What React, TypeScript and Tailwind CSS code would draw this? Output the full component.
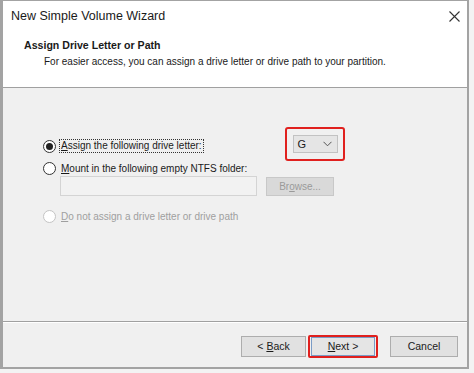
import React from "react";

function Radio({ checked, disabled }: { checked?: boolean; disabled?: boolean }) {
  return (
    <span
      className={`flex h-[13px] w-[13px] shrink-0 items-center justify-center rounded-full border bg-white ${
        disabled ? "border-[#c4c4c4]" : "border-[#333333]"
      }`}
    >
      {checked && <span className="h-[7px] w-[7px] rounded-full bg-[#222222]" />}
    </span>
  );
}

export default function App() {
  return (
    <div
      className="h-[373px] w-[474px] bg-[#f3f3f3] text-[#1a1a1a]"
      style={{ fontFamily: '"Liberation Sans", Arial, sans-serif' }}
    >
      <div className="flex h-[369px] w-[469px] flex-col border-l-[3px] border-r-[2px] border-t-[1px] border-b-[2px] border-[#a3a3a3] bg-[#f0f0f0]">
        {/* title + header */}
        <div className="flex h-[86px] flex-col bg-white">
          <div className="flex h-[30px] items-center justify-between pl-[8px] pr-[7px]">
            <span className="text-[12.5px] text-[#1a1a1a]">New Simple Volume Wizard</span>
            <svg width="11" height="11" viewBox="0 0 11 11">
              <path d="M0.5 0.5 L10.5 10.5 M10.5 0.5 L0.5 10.5" stroke="#333" strokeWidth="1.1" />
            </svg>
          </div>
          <div className="pl-[21px] pt-[8px] text-[10.6px] font-bold leading-[13px]">Assign Drive Letter or Path</div>
          <div className="pl-[41px] pt-[3px] text-[10px] leading-[13px]">
            For easier access, you can assign a drive letter or drive path to your partition.
          </div>
        </div>
        <div className="h-[1px] bg-[#a0a0a0]" />
        {/* body */}
        <div className="flex flex-1 flex-col pl-[40px] pt-[39px] text-[10px]">
          <div className="flex h-[34px] items-center">
            <div className="flex w-[242px] items-center pt-[4px]">
              <Radio checked />
              <span className="ml-[3px] border border-dotted border-[#333] px-[1px] leading-[12px]">
                <span className="underline">A</span>ssign the following drive letter:
              </span>
            </div>
            <div className="flex h-[34px] w-[60px] items-center justify-center rounded-[3px] border-[2.5px] border-[#e0201e]">
              <div className="flex h-[18px] w-[45px] items-center justify-between border border-[#c2c2c2] bg-[#e5e5e5] pl-[4px] pr-[5px]">
                <span className="text-[11px]">G</span>
                <svg width="9" height="6" viewBox="0 0 9 6">
                  <path d="M0.5 0.8 L4.5 4.8 L8.5 0.8" fill="none" stroke="#555" strokeWidth="1" />
                </svg>
              </div>
            </div>
          </div>
          <div className="flex h-[14px] items-center">
            <Radio />
            <span className="ml-[5px]">
              <span className="underline">M</span>ount in the following empty NTFS folder:
            </span>
          </div>
          <div className="mt-[1px] flex items-start">
            <div className="ml-[17px] h-[20px] w-[197px] border border-[#d4d4d4] bg-[#f2f2f2]" />
            <div className="ml-[9px] mt-[1px] flex h-[19px] w-[68px] items-center justify-center border border-[#c8c8c8] bg-[#d9d9d9] text-[#9a9a9a]">
              Br<span className="underline">o</span>wse...
            </div>
          </div>
          <div className="mt-[13px] flex h-[14px] items-center text-[#9f9f9f]">
            <Radio disabled />
            <span className="ml-[5px]">
              <span className="underline">D</span>o not assign a drive letter or drive path
            </span>
          </div>
        </div>
        {/* separator */}
        <div className="h-[1px] bg-[#a0a0a0]" />
        <div className="h-[1px] bg-white" />
        <div className="flex h-[44px] items-start justify-end pr-[9px] pt-[13px] text-[10.5px]">
          <div className="flex h-[21px] w-[65px] items-center justify-center border border-[#adadad] bg-[#e1e1e1]">
            &lt; <span className="ml-[3px] underline">B</span>ack
          </div>
          <div className="ml-[2px] mt-[-1px] flex h-[23px] w-[70px] items-center justify-center rounded-[2px] border-[2px] border-[#e0201e]">
            <div className="flex h-[19px] w-[64px] items-center justify-center border border-[#7a9cc6] bg-[#e5e5e5]">
              <span className="underline">N</span>ext &gt;
            </div>
          </div>
          <div className="ml-[12px] flex h-[21px] w-[68px] items-center justify-center border border-[#adadad] bg-[#e1e1e1]">
            Cancel
          </div>
        </div>
      </div>
    </div>
  );
}
